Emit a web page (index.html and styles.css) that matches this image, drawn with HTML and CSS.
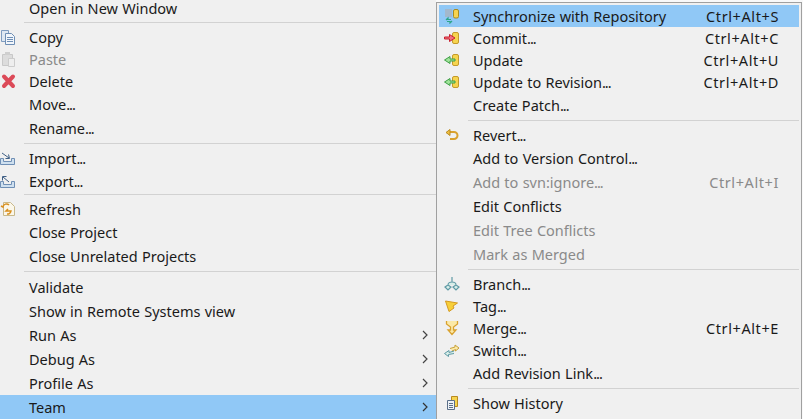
FILE: index.html
```html
<!DOCTYPE html>
<html lang="en">
<head>
    <meta charset="UTF-8">
    <title>Team menu</title>
    <link rel="stylesheet" href="styles.css">
</head>
<body>

<div class="menu main-menu">
    <div class="item">Open in New Window</div>
    <div class="sep sep-first"></div>
    <div class="item short">
        <svg class="icon" viewBox="0 0 16 16"><path d="M1.500 1.500h7v11h-7z" fill="#dfe8f2" stroke="#7f9cc0"/><path d="M5.500 4.500h6l3 3v8h-9z" fill="#f2f6fb" stroke="#6f8fb5"/><path d="M7 8.500h6M7 10.500h6M7 12.500h6" stroke="#6f8fb5"/></svg>
        Copy
    </div>
    <div class="item short disabled">
        <svg class="icon" viewBox="0 0 16 16"><path d="M2.500 3.500h10v11h-10z" fill="#dcdcdc" stroke="#c8c8c8"/><path d="M5 1h5v3H5z" fill="#cfcfcf"/><path d="M8.500 7.500h6v8h-6z" fill="#eeeeee" stroke="#cccccc"/></svg>
        Paste
    </div>
    <div class="item short">
        <svg class="icon" viewBox="0 0 16 16"><path d="M4 3.500l9 9.500M13 3.500L4 13" stroke="#dc4a58" stroke-width="4" stroke-linecap="round"/></svg>
        Delete
    </div>
    <div class="item">Move<span class="dots">...</span></div>
    <div class="item">Rename<span class="dots">...</span></div>
    <div class="sep sep-a"></div>
    <div class="item short import">
        <svg class="icon" viewBox="0 0 16 16"><path d="M.5 8.500v6h14v-6h-3v3h-8v-3z" fill="#cfe0ef" stroke="#6f8fb5"/><path d="M2 3l7 5M9.500 8.500h-4M9.500 8.500l-1-4" stroke="#3f5f85" fill="none"/></svg>
        Import<span class="dots">...</span>
    </div>
    <div class="item short">
        <svg class="icon" viewBox="0 0 16 16"><path d="M.5 8.500v6h14v-6h-3v3h-8v-3z" fill="#cfe0ef" stroke="#6f8fb5"/><path d="M9 9L3 4M2.500 3.500h4M2.500 3.500v4" stroke="#3f5f85" fill="none"/></svg>
        Export<span class="dots">...</span>
    </div>
    <div class="sep sep-b"></div>
    <div class="item short">
        <svg class="icon" viewBox="0 0 16 16"><path d="M3.500 1.500h7l4 4v9h-11z" fill="#fbf7ea" stroke="#c9b98a"/><path d="M9 4a3.500 3.500 0 0 0-6 2l-2-1M7 13a3.500 3.500 0 0 0 4-3l-5 0 2-2" stroke="#d98f1e" stroke-width="1.500" fill="none"/></svg>
        Refresh
    </div>
    <div class="item">Close Project</div>
    <div class="item">Close Unrelated Projects</div>
    <div class="sep sep-c"></div>
    <div class="item">Validate</div>
    <div class="item">Show in Remote Systems view</div>
    <div class="item">Run As<svg class="arrow" viewBox="0 0 8 12"><path d="M2 2l4 4-4 4" fill="none" stroke="#444" stroke-width="1.200"/></svg></div>
    <div class="item">Debug As<svg class="arrow" viewBox="0 0 8 12"><path d="M2 2l4 4-4 4" fill="none" stroke="#444" stroke-width="1.200"/></svg></div>
    <div class="item">Profile As<svg class="arrow" viewBox="0 0 8 12"><path d="M2 2l4 4-4 4" fill="none" stroke="#444" stroke-width="1.200"/></svg></div>
    <div class="item selected">Team<svg class="arrow" viewBox="0 0 8 12"><path d="M2 2l4 4-4 4" fill="none" stroke="#333" stroke-width="1.200"/></svg></div>
</div>

<div class="menu sub-menu">
    <div class="item short selected">
        <svg class="icon" viewBox="0 0 16 16"><path d="M1 1h7v8H1z" fill="#a3b8cc"/><rect x="9.500" y="1.500" width="5" height="8.500" rx="1.500" fill="#f6d44f" stroke="#a88a20"/><path d="M2 12l2-2v1.500h3M8 13l-2 2v-1.500H3" stroke="#2fa58a" fill="none" stroke-width="1.200"/></svg>
        <span class="label">Synchronize with Repository</span><span class="keys">Ctrl+Alt+S</span>
    </div>
    <div class="item short">
        <svg class="icon" viewBox="0 0 16 16"><rect x="8.500" y="2.500" width="6" height="11" rx="1.500" fill="#f6d44f" stroke="#c49a2a"/><path d="M.5 7h5V4.500L11 8l-5.500 3.500V9h-5z" fill="#f2707f" stroke="#c8202f"/></svg>
        <span class="label">Commit<span class="dots">...</span></span><span class="keys">Ctrl+Alt+C</span>
    </div>
    <div class="item short">
        <svg class="icon" viewBox="0 0 16 16"><rect x="8.500" y="2.500" width="6" height="11" rx="1.500" fill="#f6d44f" stroke="#c49a2a"/><path d="M11 7H6V4.500L.5 8 6 11.500V9h5z" fill="#9fe39a" stroke="#3f9f45"/></svg>
        <span class="label">Update</span><span class="keys">Ctrl+Alt+U</span>
    </div>
    <div class="item short">
        <svg class="icon" viewBox="0 0 16 16"><rect x="8.500" y="2.500" width="6" height="11" rx="1.500" fill="#f6d44f" stroke="#c49a2a"/><path d="M11 7H6V4.500L.5 8 6 11.500V9h5z" fill="#9fe39a" stroke="#3f9f45"/></svg>
        <span class="label">Update to Revision<span class="dots">...</span></span><span class="keys">Ctrl+Alt+D</span>
    </div>
    <div class="item"><span class="label">Create Patch<span class="dots">...</span></span></div>
    <div class="sep sep-d"></div>
    <div class="item short">
        <svg class="icon" viewBox="0 0 16 16"><path d="M5 5h5a3.500 3.500 0 0 1 0 7H6" fill="none" stroke="#d9a12e" stroke-width="2"/><path d="M2 5.500l4-3v6z" fill="#f0c040" stroke="#b98a20"/></svg>
        <span class="label">Revert<span class="dots">...</span></span>
    </div>
    <div class="item"><span class="label">Add to Version Control<span class="dots">...</span></span></div>
    <div class="item disabled"><span class="label">Add to svn:ignore<span class="dots">...</span></span><span class="keys">Ctrl+Alt+I</span></div>
    <div class="item"><span class="label">Edit Conflicts</span></div>
    <div class="item disabled"><span class="label">Edit Tree Conflicts</span></div>
    <div class="item disabled"><span class="label">Mark as Merged</span></div>
    <div class="sep sep-e"></div>
    <div class="item short">
        <svg class="icon" viewBox="0 0 16 16"><path d="M8 1v5M4 9c0-2 2-3 4-3s4 1 4 3M1 11l3-2 3 2-3 3zM9 11l3-2 3 2-3 3z" fill="#d7ede8" stroke="#5f9aa5" stroke-width="1.200"/></svg>
        <span class="label">Branch<span class="dots">...</span></span>
    </div>
    <div class="item short">
        <svg class="icon" viewBox="0 0 16 16"><path d="M1.500 3l12 2-4.500 3 1 2-5 3.500z" fill="#f7cf3a" stroke="#d59a20"/></svg>
        <span class="label">Tag<span class="dots">...</span></span>
    </div>
    <div class="item short">
        <svg class="icon" viewBox="0 0 16 16"><path d="M2.500 1v3l4 3v3H4l4 4.500 4-4.500H9.500V7l4-3V1" fill="#fbe9a8" stroke="#d9a12e" stroke-width="1.300"/></svg>
        <span class="label">Merge<span class="dots">...</span></span><span class="keys">Ctrl+Alt+E</span>
    </div>
    <div class="item short">
        <svg class="icon" viewBox="0 0 16 16"><path d="M6 6.500l5-1.500V3l4 3-3.500 3V7.500L8 9" fill="#fbe9a8" stroke="#c9a23a"/><path d="M10 9l-5 1.500v-2l-4.500 3 4 3v-2L10 11.500" fill="#d7ede8" stroke="#5f9aa5"/></svg>
        <span class="label">Switch<span class="dots">...</span></span>
    </div>
    <div class="item"><span class="label">Add Revision Link<span class="dots">...</span></span></div>
    <div class="sep sep-f"></div>
    <div class="item short">
        <svg class="icon" viewBox="0 0 16 16"><path d="M7.500 1.500h6v10h-6z" fill="#f6d44f" stroke="#b98a20"/><path d="M3.500 5.500h7v9h-7z" fill="#eef2f7" stroke="#5a6f88"/><path d="M5 8.500h4M5 10.500h4M5 12.500h4" stroke="#5a6f88"/></svg>
        <span class="label">Show History</span>
    </div>
</div>

</body>
</html>
```

FILE: styles.css
```css
html, body {
    margin: 0;
    padding: 0;
    height: 100%;
    overflow: hidden;
    background: #f9f9f9;
}

body {
    font-family: "Noto Sans", sans-serif;
    font-size: 14.5px;
    word-spacing: 0.5px;
    color: #1a1a1a;
}

.menu {
    background: #f0f0f0;
}

.main-menu {
    width: 436px;
    height: 100%;
}

/* first row is cut by the top of the window */
.main-menu .item:first-child {
    height: 16px;
    line-height: 16px;
    padding-bottom: 3px;
    align-items: flex-start;
}

.item {
    display: flex;
    align-items: center;
    height: 24px;
    padding-left: 29px;
    position: relative;
    white-space: nowrap;
}

.item.short {
    height: 22px;
}

.item.import {
    margin-bottom: 1px;
}

.item.disabled {
    color: #8a8a8a;
}

.item.selected {
    background: #90c8f6;
}

.dots {
    letter-spacing: -1px;
    margin-right: 1px;
}

.icon {
    position: absolute;
    left: 0;
    top: 3px;
    width: 16px;
    height: 16px;
}

.arrow {
    position: absolute;
    right: 7px;
    top: 6px;
    width: 8px;
    height: 12px;
}

.sep {
    height: 1px;
    background: #d2d2d2;
    margin-left: 24px;
}

.sep-first { margin-top: 3px; margin-bottom: 3px; }
.sep-a { margin-top: 3px; margin-bottom: 3px; }
.sep-b { margin-top: 2px; margin-bottom: 3px; }
.sep-c { margin-top: 3px; margin-bottom: 3px; }

.sub-menu {
    position: absolute;
    left: 436px;
    top: 2px;
    width: 360px;
    height: 430px;
    margin: 0;
    padding: 2px 2px 0 2px;
    border: 1px solid #a0a0a0;
}

.sub-menu .item {
    padding-left: 34px;
}

.sub-menu .icon {
    left: 5px;
}

.sub-menu .sep {
    margin-left: 29px;
}

.label {
    flex: 1;
}

.keys {
    padding-right: 20px;
    letter-spacing: 0.6px;
}

.sep-d { margin-top: 3px; margin-bottom: 3px; }
.sep-e { margin-top: 3px; margin-bottom: 3px; }
.sep-f { margin-top: 3px; margin-bottom: 3px; }
```
